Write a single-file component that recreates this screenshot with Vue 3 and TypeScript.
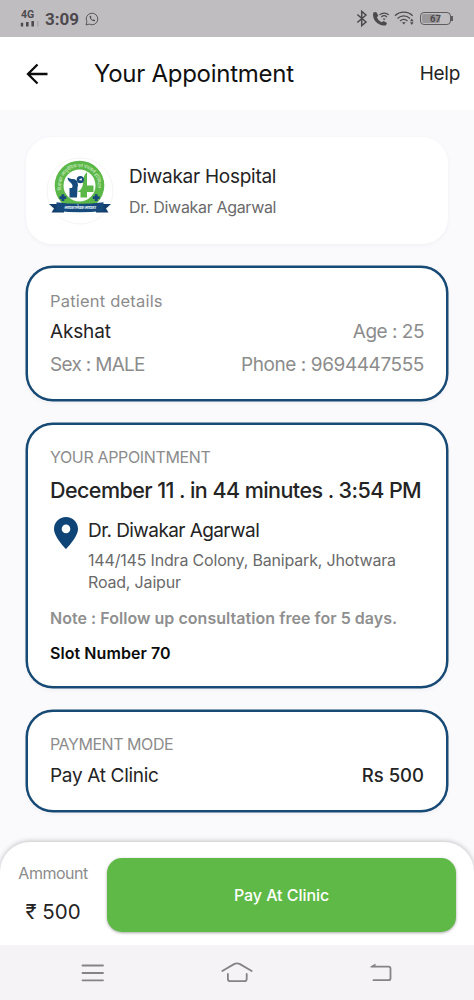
<template>
  <div class="screen">
    <div class="status-bar">
      <div class="status-left">
        <div class="signal">
          <span class="network">4G</span>
          <svg width="19" height="6" viewBox="0 0 19 6">
            <path d="M.8 1.800h2.400v3.700H.8zM6 1h2.600v4.500H6zM11.400 0h2.600v5.500h-2.600z" fill="#4d4a4e" />
            <path d="M17 0h1.600v5.500H17z" fill="#aaa7ab" />
          </svg>
        </div>
        <span class="clock">3:09</span>
        <svg class="whatsapp" width="14" height="14" viewBox="0 0 14 14" fill="none" stroke="#5b585c">
          <path d="M1 13l.9-3.3A5.8 5.8 0 1 1 4.3 12.100z" stroke-width="1" />
          <path d="M4.700 4.100c-.3 2.800 2.300 5.300 5 5.200l.4-1.100-1.500-.9-.8.6c-.9-.4-1.500-1-1.900-1.900l.6-.8-.7-1.500z" fill="#4d4a4e" stroke="none" />
        </svg>
      </div>
      <div class="status-right">
        <svg width="12" height="17" viewBox="0 0 12 17" fill="none" stroke="#4d4a4e" stroke-width="1.500">
          <path d="M1.300 4.500l8.700 7.500L5.700 15.600V1.400L10 5 1.300 12.500" />
        </svg>
        <svg width="18" height="16" viewBox="0 0 18 16" fill="none" stroke="#4d4a4e">
          <path d="M1.300 1.500C-.5 8.500 6.500 15.800 14 14.300l1-2.300-3.300-2.100-2 1.300C7.300 10 5.800 8.400 5 6.200l1.300-1.700L4.200 1z" fill="#4d4a4e" stroke="none" />
          <path d="M7.500 3.900c2.700-2.500 6.700-2.500 9.300 0M9.300 6c1.700-1.500 4-1.500 5.600 0" stroke-width="1.200" />
          <path d="M10.700 7.600h2.900L12.100 9.300z" fill="#4d4a4e" stroke="none" />
        </svg>
        <svg width="21" height="15" viewBox="0 0 21 15" fill="none" stroke="#4d4a4e">
          <path d="M1 4.700c5-4.700 12.800-4.700 17.600 0M3.500 7.400c3.700-3.300 8.900-3.300 12.500 0M6 10c2.300-2 5.300-2 7.500 0" stroke-width="1.300" />
          <path d="M7.900 11.300h3.800L9.800 13.600zM16 10.300L17.800 7.500l1.800 2.800zM16 11.200h3.600L17.800 14z" fill="#4d4a4e" stroke="none" />
        </svg>
        <div class="battery">
          <div class="battery-body">
            <div class="battery-level" :style="{ width: battery + '%' }"></div>
            <span>{{ battery }}</span>
          </div>
          <i class="battery-tip"></i>
        </div>
      </div>
    </div>

    <header class="header">
      <svg class="back" width="24" height="24" viewBox="0 0 24 24" fill="none" stroke="#0c0c0c" stroke-width="2.300">
        <path d="M22.500 12H3M12.500 2.500L3 12l9.500 9.500" />
      </svg>
      <h1>Your Appointment</h1>
      <a class="help">Help</a>
    </header>

    <main class="content">
      <section class="hospital">
        <svg class="logo" width="68" height="68" viewBox="0 0 68 68">
          <defs>
            <path id="ring" d="M15.900 33A18.200 18.200 0 1 1 51.100 33" />
          </defs>
          <circle cx="34" cy="34" r="33" fill="#fff" stroke="#f2f1f3" stroke-width=".8" />
          <circle cx="33.500" cy="28.500" r="24.800" fill="#5cb749" />
          <circle cx="33.500" cy="28.500" r="16" fill="#fff" />
          <text class="ring-text">
            <textPath href="#ring" textLength="64">दिवाकर आयुर्वेदिक एवं पंचकर्म हॉस्पिटल</textPath>
          </text>
          <path d="M37 25.500c0-4 1-8 4-10.500v13.500h6.500V35H41v5.500h-6.500V35H31c3.500-1 6-5 6-9.500z" fill="#5cb749" />
          <path d="M21.500 20.500c2 .5 3 1.800 5 1.500 2-.3 3 .5 4.500 2 .8 2.500 1.500 4 .5 6.500L31 40.500h-7.500V31H26c1-2 .5-3.500-1-5-2-1.500-3.300-3-3.500-5.500z" fill="#174a7c" />
          <circle cx="34.300" cy="22.700" r="3.600" fill="#174a7c" />
          <path d="M32.800 23l2.700-2 .5 2.600z" fill="#fff" />
          <path d="M15.500 37.300h2.800v2h2v2.600h-2v2h-2.800v-2h-2v-2.600h2zM48.800 37.300h2.800v2h2v2.600h-2v2h-2.800v-2h-2v-2.600h2z" fill="#174a7c" />
          <path d="M3 47h15v8.500H5.500L8 51.500zM65 47H50v8.500h12.500L60 51.500z" fill="#123f6b" />
          <path d="M10.500 45.300q23 3 47 0v8.500q-23.500 3-47 0z" fill="#174a7c" />
          <text class="banner-text" x="34" y="51.600" text-anchor="middle" textLength="32">आपका सेवक आपका</text>
        </svg>
        <div class="hospital-info">
          <p class="hospital-name">Diwakar Hospital</p>
          <p class="hospital-doctor">Dr. Diwakar Agarwal</p>
        </div>
      </section>

      <section class="card patient">
        <p class="label patient-label">Patient details</p>
        <div class="row">
          <span class="value name">{{ patient.name }}</span>
          <span class="muted age">Age : {{ patient.age }}</span>
        </div>
        <div class="row">
          <span class="muted sex">Sex : {{ patient.sex }}</span>
          <span class="muted phone">Phone : {{ patient.phone }}</span>
        </div>
      </section>

      <section class="card appointment">
        <p class="label appointment-label">YOUR APPOINTMENT</p>
        <p class="date">December 11 . in 44 minutes . 3:54 PM</p>
        <div class="place">
          <svg class="pin" width="24" height="32" viewBox="0 0 24 32">
            <path d="M12 0C5.300 0 0 5.300 0 11.900 0 20 12 32 12 32s12-12 12-20.100C24 5.300 18.700 0 12 0zm0 16.200a4.300 4.300 0 1 1 0-8.600 4.300 4.300 0 0 1 0 8.600z" fill="#0f4576" />
          </svg>
          <div>
            <p class="value doctor">Dr. Diwakar Agarwal</p>
            <p class="address">144/145 Indra Colony, Banipark, Jhotwara<br />Road, Jaipur</p>
          </div>
        </div>
        <p class="note">Note : Follow up consultation free for 5 days.</p>
        <p class="slot">Slot Number 70</p>
      </section>

      <section class="card payment">
        <p class="label payment-label">PAYMENT MODE</p>
        <div class="row">
          <span class="value mode">Pay At Clinic</span>
          <span class="price">Rs {{ amount }}</span>
        </div>
      </section>
    </main>

    <footer class="checkout">
      <div class="amount">
        <p class="amount-label">Ammount</p>
        <p class="amount-value">₹ {{ amount }}</p>
      </div>
      <button class="pay" type="button"><span>Pay At Clinic</span></button>
    </footer>

    <nav class="nav-bar">
      <svg width="32" height="24" viewBox="0 0 32 24">
        <path d="M6.500 4.500h20.500M6.500 12h20.500M6.500 19.300h20.500" />
      </svg>
      <svg width="32" height="24" viewBox="0 0 32 24">
        <path d="M1.300 10L13 3.100q3-1.400 6 0l11.700 6.900M6.900 13v4.900q0 2.200 2.200 2.200h14.400q2.200 0 2.200-2.200V13" />
      </svg>
      <svg width="32" height="24" viewBox="0 0 32 24">
        <path d="M7 5.700h16.500q2 0 2 2v9.500q0 2-2 2H8.500" />
        <path d="M4.500 6.200L10.500 2.500v3.500z" class="solid" />
      </svg>
    </nav>
  </div>
</template>

<script setup lang="ts">
import { ref } from "vue";

interface Patient {
  name: string;
  age: number;
  sex: string;
  phone: string;
}

const patient = ref<Patient>({
  name: "Akshat",
  age: 25,
  sex: "MALE",
  phone: "9694447555",
});

const amount = ref(500);
const battery = ref(67);
</script>

<style>
body {
  margin: 0;
}
</style>

<style scoped>
.screen {
  display: flex;
  flex-direction: column;
  box-sizing: border-box;
  width: 474px;
  height: 1000px;
  overflow: hidden;
  background: #faf9fc;
  color: #242424;
  font-family: Inter, "Noto Sans", sans-serif;
}

p,
h1 {
  margin: 0;
  white-space: nowrap;
}

span {
  white-space: nowrap;
}

svg {
  display: block;
  flex: none;
  overflow: visible;
}

.status-bar {
  display: flex;
  flex: none;
  justify-content: space-between;
  align-items: center;
  box-sizing: border-box;
  height: 37px;
  padding: 0 20px;
  background: #c0bdc1;
  color: #4d4a4e;
}

.status-left,
.status-right {
  display: flex;
  align-items: center;
}

.network {
  display: block;
  margin: 0 0 2px 1px;
  font: 700 10.500px/9px Roboto, sans-serif;
}

.clock {
  margin: 1px 6px 0 6px;
  font: 700 17px/20px Roboto, sans-serif;
}

.status-right {
  gap: 4px;
  padding-right: 1px;
}

.battery {
  display: flex;
  align-items: center;
  margin-left: 1px;
}

.battery-body {
  position: relative;
  box-sizing: border-box;
  width: 31px;
  height: 13px;
  padding: 1px;
  border: 1px solid #5f5c60;
  border-radius: 4px;
}

.battery-level {
  height: 100%;
  border-radius: 2px;
  background: #9a979b;
}

.battery-body span {
  position: absolute;
  inset: 0;
  text-align: center;
  font: 700 9.500px/11px Roboto, sans-serif;
}

.battery-tip {
  width: 2px;
  height: 5px;
  background: #5f5c60;
}

.header {
  display: flex;
  flex: none;
  align-items: center;
  height: 73px;
  padding: 0 14px 0 25px;
  background: #fff;
}

.header h1 {
  margin-left: 45px;
  color: #111;
  font-size: 24px;
  font-weight: 400;
  letter-spacing: -0.270px;
}

.help {
  margin-left: auto;
  font-size: 19px;
  letter-spacing: -0.300px;
}

.content {
  display: flex;
  flex: 1;
  flex-direction: column;
  gap: 22px;
  padding: 27px 26px 0;
}

.hospital {
  display: flex;
  align-items: center;
  box-sizing: border-box;
  height: 107px;
  padding: 0 20px;
  border-radius: 26px;
  background: #fff;
  box-shadow: 0 1px 4px rgba(60, 50, 80, 0.05);
}

.ring-text {
  fill: #d8f0cd;
  font-size: 4.800px;
  font-family: "Noto Sans", sans-serif;
}

.banner-text {
  fill: #dce8f2;
  font-size: 4.500px;
  font-weight: 700;
}

.hospital-info {
  margin: 3px 0 0 15px;
}

.hospital-name {
  font-size: 19px;
  letter-spacing: -0.270px;
  line-height: 31px;
}

.hospital-doctor {
  color: #6a6a6a;
  font-size: 16px;
  letter-spacing: -0.330px;
  line-height: 31px;
}

.card {
  box-sizing: border-box;
  flex: none;
  border: 2px solid #174a74;
  border-radius: 27px;
  padding: 20px 22px 0;
  background: #fff;
  box-shadow: 0 0 0 0.500px #174a74, 0 2px 4px rgba(60, 80, 110, 0.06);
}

.patient {
  height: 135px;
}

.appointment {
  height: 265px;
}

.payment {
  height: 102px;
}

.row {
  display: flex;
  justify-content: space-between;
  align-items: center;
}

.label {
  color: #8c8c8c;
  font-size: 16px;
  line-height: 26px;
}

.value {
  font-size: 19px;
}

.muted {
  color: #8c8c8c;
  font-size: 19px;
}

.patient .row {
  height: 33px;
}

.patient-label {
  margin-bottom: 1px;
  font-size: 16.500px;
  letter-spacing: 0.200px;
}

.name {
  letter-spacing: -0.150px;
}

.age {
  letter-spacing: -0.500px;
}

.sex {
  letter-spacing: -0.700px;
}

.phone {
  letter-spacing: -0.420px;
}

.appointment,
.payment {
  padding-top: 19px;
}

.appointment-label {
  letter-spacing: -0.350px;
}

.payment-label {
  letter-spacing: -0.450px;
}

.date {
  margin-top: 1px;
  font-size: 21.500px;
  font-weight: 500;
  letter-spacing: -0.560px;
  line-height: 39px;
}

.place {
  display: flex;
  margin-top: 7px;
}

.pin {
  margin: 0 10px 0 4px;
}

.doctor {
  padding-top: 1px;
  letter-spacing: -0.580px;
  line-height: 26px;
}

.address {
  margin-top: 5px;
  color: #6a6a6a;
  font-size: 16px;
  letter-spacing: -0.180px;
  line-height: 22px;
}

.note {
  margin-top: 12px;
  color: #8f8f8f;
  font-size: 16px;
  font-weight: 600;
  letter-spacing: 0.040px;
  line-height: 26px;
}

.slot {
  margin-top: 9px;
  color: #0c0c0c;
  font-size: 16px;
  font-weight: 600;
  letter-spacing: 0.070px;
  line-height: 26px;
}

.payment .row {
  height: 36px;
}

.mode {
  letter-spacing: -0.320px;
}

.price {
  font-size: 18.500px;
  font-weight: 500;
}

.checkout {
  display: flex;
  flex: none;
  box-sizing: border-box;
  height: 103px;
  padding: 16px 18px 0 18px;
  border-radius: 30px 30px 0 0;
  background: #fff;
  box-shadow: 0 -1px 5px rgba(0, 0, 0, 0.22);
}

.amount {
  width: 70px;
  text-align: center;
}

.amount-label {
  color: #8c8c8c;
  font-size: 16px;
  letter-spacing: -0.500px;
  line-height: 31px;
}

.amount-value {
  margin-top: 7px;
  font-size: 20.500px;
  line-height: 32px;
}

.pay {
  width: 349px;
  height: 74px;
  margin-left: 19px;
  padding: 0;
  border: 0;
  border-radius: 15px;
  background: #5fb946;
  box-shadow: 0 1px 3px rgba(0, 0, 0, 0.35);
  color: #fff;
  font: 500 16px Inter, sans-serif;
  letter-spacing: -0.050px;
}

.nav-bar {
  display: flex;
  flex: none;
  z-index: 1;
  justify-content: space-between;
  box-sizing: border-box;
  height: 55px;
  padding: 16px 77px 0 76px;
  background: #f5f3f6;
}

.nav-bar path {
  fill: none;
  stroke: #858386;
  stroke-width: 1.800;
  stroke-linecap: round;
}

.nav-bar .solid {
  fill: #858386;
  stroke: none;
}
</style>
